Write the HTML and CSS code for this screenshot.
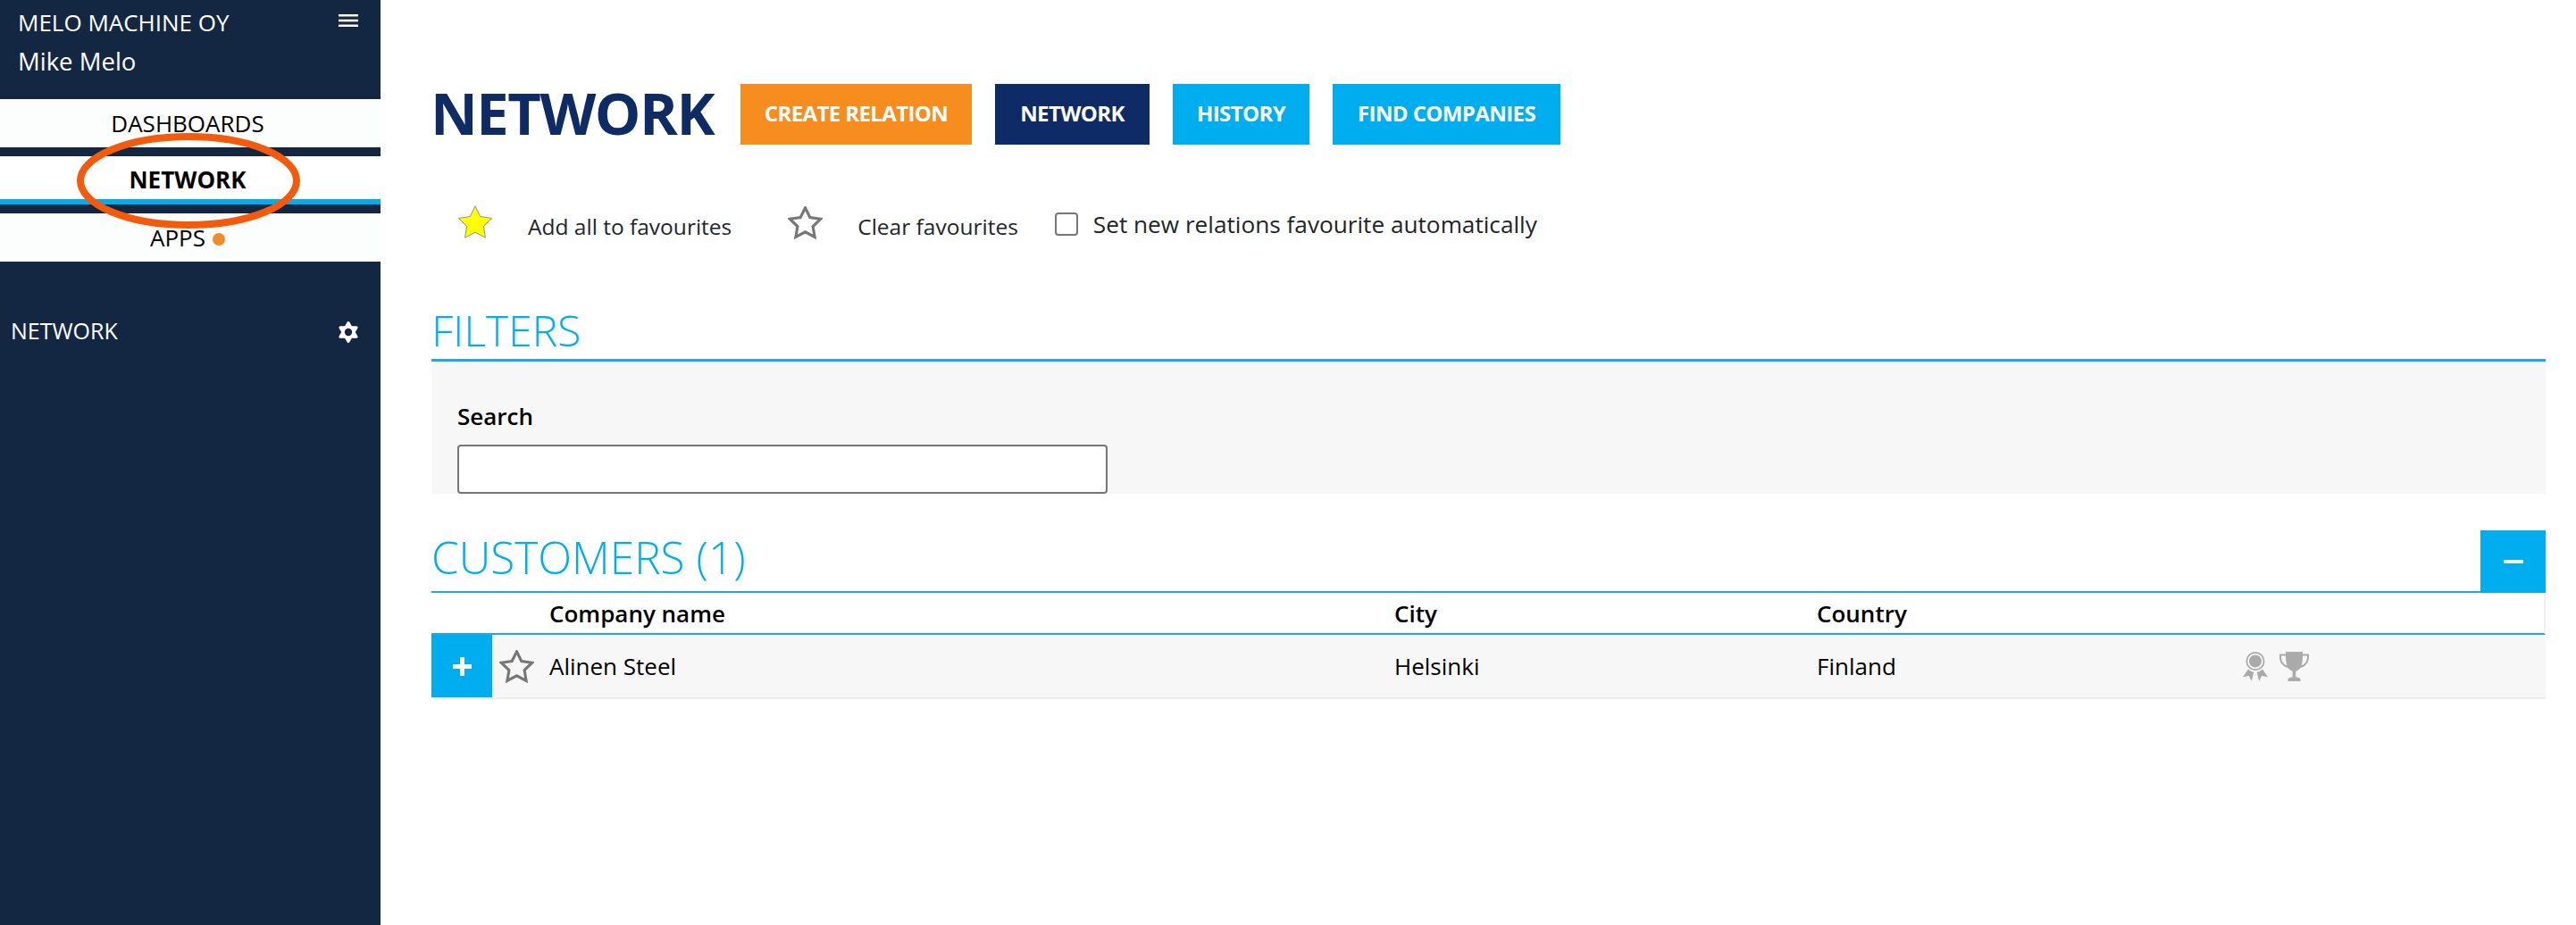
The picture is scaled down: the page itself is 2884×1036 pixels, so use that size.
FILE: index.html
```html
<!DOCTYPE html>
<html lang="en">
<head>
<meta charset="utf-8">
<title>Network</title>
<link rel="stylesheet" href="styles.css">
</head>
<body>
<div class="app">
  <aside class="sidebar">
    <div class="account">
      <div class="account-row">
        <span>MELO MACHINE OY</span>
        <svg class="burger" viewBox="0 0 22 14"><path d="M0 0h22v2.6H0zM0 5.700h22v2.600H0zM0 11.400h22V14H0z" fill="#fff"/></svg>
      </div>
      <div class="account-user">Mike Melo</div>
    </div>
    <nav class="menu">
      <a class="menu-item">DASHBOARDS</a>
      <a class="menu-item menu-active">NETWORK</a>
      <a class="menu-item">APPS<span class="dot"></span></a>
      <svg class="oval" viewBox="0 0 250 107"><ellipse cx="125" cy="53.500" rx="121" ry="49.500" fill="none" stroke="#f45a0c" stroke-width="8"/></svg>
    </nav>
    <div class="sub">
      <span>NETWORK</span>
      <svg class="gear" viewBox="0 0 24 26"><path fill="#fff" stroke="#fff" stroke-width="3" stroke-linejoin="round" d="M12 2.500 21.100 18.250H2.900zM12 23.500 2.900 7.750H21.100z"/><circle cx="12" cy="13" r="4.200" fill="#132743"/></svg>
    </div>
  </aside>
  <main class="main">
    <header class="title-row">
      <h1 class="title">NETWORK</h1>
      <a class="btn btn-orange">CREATE RELATION</a>
      <a class="btn btn-navy">NETWORK</a>
      <a class="btn btn-blue btn-history">HISTORY</a>
      <a class="btn btn-blue btn-find">FIND COMPANIES</a>
    </header>
    <div class="fav-row">
      <svg class="star star-yellow" viewBox="1 1 22 21.500"><polygon points="12,2 15.090,8.260 22,9.270 17,14.140 18.180,21.020 12,17.770 5.820,21.020 7,14.140 2,9.270 8.910,8.260"/></svg>
      <span class="fav-text fav-add">Add all to favourites</span>
      <svg class="star star-empty" viewBox="1 1 22 21.500"><polygon points="12,2 15.090,8.260 22,9.270 17,14.140 18.180,21.020 12,17.770 5.820,21.020 7,14.140 2,9.270 8.910,8.260"/></svg>
      <span class="fav-text fav-clear">Clear favourites</span>
      <label class="auto">
        <input class="auto-check" type="checkbox">
        <span>Set new relations favourite automatically</span>
      </label>
    </div>
    <h2 class="section-title filters-title">FILTERS</h2>
    <section class="filters">
      <label class="search-label" for="search">Search</label>
      <input class="search" id="search" type="text">
    </section>
    <div class="customers-head">
      <h2 class="section-title customers-title">CUSTOMERS (1)</h2>
      <button class="collapse" type="button" aria-label="Collapse"><span class="minus"></span></button>
    </div>
    <div class="grid-row grid-head">
      <span></span><span></span>
      <span>Company name</span><span>City</span><span>Country</span><span></span>
    </div>
    <div class="grid-row grid-data">
      <button class="expand" type="button" aria-label="Expand"><span class="plus"></span></button>
      <svg class="star star-row" viewBox="1 1 22 21.500"><polygon points="12,2 15.090,8.260 22,9.270 17,14.140 18.180,21.020 12,17.770 5.820,21.020 7,14.140 2,9.270 8.910,8.260"/></svg>
      <span>Alinen Steel</span><span>Helsinki</span><span>Finland</span>
      <span class="badges">
        <svg class="ribbon" viewBox="0 0 28 33"><path fill="#aaa" fill-rule="evenodd" d="M14 0a10.500 10.500 0 1 1 0 21 10.500 10.500 0 0 1 0-21zm0 1.700a8.800 8.800 0 1 0 0 17.600 8.800 8.800 0 0 0 0-17.600zm0 1.800a7 7 0 1 1 0 14 7 7 0 0 1 0-14z"/><path fill="#aaa" d="M6 19.500c2 2 4 3 6.300 3.200L9.800 33l-3-6.200L0 28.500zM22 19.500c-2 2-4 3-6.300 3.200l2.500 10.300 3-6.200 6.800 1.700z"/></svg>
        <svg class="trophy" viewBox="0 0 33 33"><path fill="#aaa" d="M7 0h19v2.500h7v3.300c0 6.500-4 11-9.500 12.300-1.500 2-3.500 3.200-5.200 3.700v6.500c2 .2 4 .9 5.200 2.200v2.500H9.500V30.500c1.200-1.300 3.200-2 5.200-2.200v-6.500c-1.700-.5-3.700-1.700-5.200-3.700C4 16.800 0 12.300 0 5.800V2.500h7zM2 4.500v1.300c0 4.800 2.700 8.300 6.500 9.700C7.500 12.500 7 8.500 7 4.500zm29 0h-5c0 4-.5 8-1.500 11 3.800-1.400 6.500-4.900 6.500-9.700z"/></svg>
      </span>
    </div>
  </main>
</div>
</body>
</html>
```
FILE: styles.css
```css
* { box-sizing: border-box; }
html, body { margin: 0; height: 100%; overflow: hidden; background: #fff; }
body { font-family: "Open Sans", "Noto Sans", sans-serif; font-size: 26px; color: #000; }

.app { display: flex; height: 1036px; }

.sidebar { width: 426px; flex: none; background: #132743; color: #fff; }
.account { height: 111px; padding: 7px 25px 0 20px; }
.account-row { display: flex; justify-content: space-between; align-items: center; height: 36px; }
.account-user { margin-top: 8px; height: 36px; line-height: 36px; font-size: 27.500px; }
.burger { width: 22px; height: 14px; margin-top: -5px; }

.menu { position: relative; display: flex; flex-direction: column; }
.menu-item { height: 54px; background: #fcfdfd; color: #000; display: flex; align-items: center; justify-content: center; padding-right: 6px; }
.menu-active { height: 54px; margin: 10px 0; background: #fff; font-weight: 700; border-bottom: 6px solid #00aeef; box-shadow: 0 10px 0 #132743; padding-top: 3px; }
.dot { width: 14px; height: 14px; border-radius: 50%; background: #f28c28; margin: 4px 0 0 8px; }
.oval { position: absolute; left: 86px; top: 38px; width: 250px; height: 107px; }

.sub { display: flex; justify-content: space-between; align-items: center; margin-top: 59px; padding: 0 24px 0 12px; height: 36px; font-size: 25px; }
.gear { width: 24px; height: 26px; margin-top: 3px; }

.main { flex: 1; padding: 94px 34px 0 57px; min-width: 0; }
.title-row { display: flex; align-items: center; height: 68px; }
.title { margin: -5px 28px 0 -1px; width: 319px; font-size: 65px; font-weight: 700; letter-spacing: -1.500px; color: #0f2b66; line-height: 68px; }
.btn { height: 68px; display: flex; align-items: center; justify-content: center; color: #fff; font-size: 24px; font-weight: 700; letter-spacing: -.6px; margin-right: 26px; padding: 0 0 3px; }
.btn-orange { width: 259px; background: #f78d1e; }
.btn-navy { width: 173px; background: #0f2b66; }
.btn-history { width: 153px; }
.btn-find { width: 255px; }
.btn-blue { background: #00aeef; }

.fav-row { display: flex; align-items: center; height: 40px; margin-top: 67px; padding-left: 28px; color: #212529; }
.star { flex: none; }
.star-yellow { width: 42px; height: 40px; fill: #ffff00; stroke: #888; stroke-width: .5; }
.star-empty { width: 39px; height: 37px; fill: none; stroke: #777; stroke-width: 1.8; margin-left: 63px; }
.fav-text { padding-top: 8px; font-size: 24.500px; }
.fav-add { margin-left: 38px; }
.fav-clear { margin-left: 39px; }
.auto { display: flex; align-items: center; margin-left: 41px; padding-top: 3px; font-size: 26.200px; }
.auto-check { appearance: none; width: 26px; height: 26px; margin: 0 17px 0 0; background: #fff; border: 2px solid #767676; border-radius: 4px; }

.section-title { margin: 0; font-size: 48px; font-weight: 300; color: #00aeef; line-height: 60px; }
.filters-title { margin-top: 66px; height: 70px; padding-top: 5px; border-bottom: 3px solid #1fa9e1; }
.filters { height: 148px; background: #f7f7f7; padding: 43px 0 0 29px; }
.search-label { display: block; font-weight: 600; line-height: 36px; height: 50px; color: #000; }
.search { display: block; width: 728px; height: 55px; border: 2px solid #767676; border-radius: 4px; background: #fff; }

.customers-head { display: flex; justify-content: space-between; margin-top: 41px; height: 70px; border-bottom: 2px solid #1fa9e1; }
.customers-title { font-size: 49.500px; }
.collapse { width: 73px; height: 70px; border: 0; padding: 0; background: #00aeef; display: flex; align-items: center; justify-content: center; }
.minus { width: 22px; height: 4px; background: #fff; }

.grid-row { display: grid; grid-template-columns: 68px 64px 946px 473px 477px 1fr; align-items: center; }
.grid-head { height: 47px; font-weight: 600; border-bottom: 2px solid #1fa9e1; border-right: 2px solid #f0f0f0; }
.grid-data { height: 72px; background: #f7f7f8; border-bottom: 2px solid #eeeeee; }
.expand { width: 68px; height: 70px; border: 0; padding: 0; background: #00aeef; display: flex; align-items: center; justify-content: center; }
.plus { position: relative; width: 21px; height: 5px; background: #fff; }
.plus::after { content: ""; position: absolute; left: 8px; top: -8px; width: 5px; height: 21px; background: #fff; }
.star-row { width: 39px; height: 37px; margin-left: 8px; fill: none; stroke: #777; stroke-width: 1.800; }
.badges { display: flex; align-items: center; gap: 13px; }
.ribbon { width: 28px; height: 33px; }
.trophy { width: 33px; height: 33px; }
```
